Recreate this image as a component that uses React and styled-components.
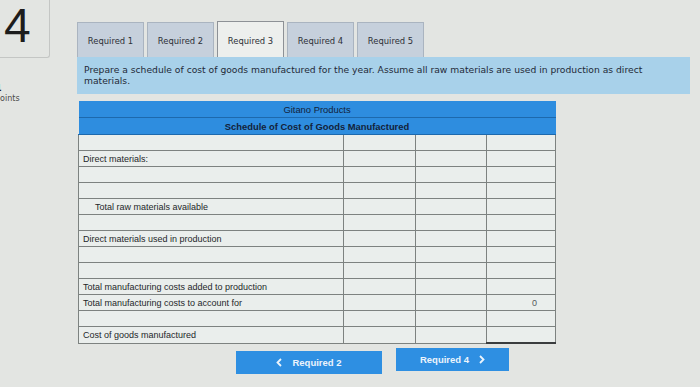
import React from 'react';
import styled, { createGlobalStyle } from 'styled-components';

const GlobalStyle = createGlobalStyle`
  html, body {
    margin: 0;
    padding: 0;
    background: #e3e5e2;
  }
  body {
    font-family: "DejaVu Sans", Verdana, sans-serif;
  }
`;

const Page = styled.div`
  display: flex;
  width: 700px;
  height: 387px;
  overflow: hidden;
  background: #e3e5e2;
`;

const Sidebar = styled.div`
  width: 77px;
  flex-shrink: 0;
  display: flex;
  flex-direction: column;
`;

const NumberBox = styled.div`
  width: 50px;
  height: 58px;
  box-sizing: border-box;
  border-right: 1px solid #c4c6c4;
  border-bottom: 1px solid #c4c6c4;
  border-bottom-right-radius: 3px;
  padding: 3px 0 0 4px;
  font-family: "Liberation Sans", Arial, sans-serif;
  font-size: 48px;
  line-height: 46px;
  color: #1d1d1d;
`;

const PointsBlock = styled.div`
  margin-top: 26px;
  overflow: hidden;
  font-size: 8px;
  line-height: 10px;
  color: #4a4a4a;
  & > span {
    display: block;
    margin-left: -5px;
  }
  & > b {
    display: block;
    margin-left: -4px;
    font-size: 8px;
    color: #222;
  }
`;

const Main = styled.div`
  flex: 1;
  padding-top: 22px;
  display: flex;
  flex-direction: column;
`;

const Tabs = styled.div`
  display: flex;
  gap: 3px;
  height: 35px;
`;

const Tab = styled.div`
  width: 67px;
  box-sizing: border-box;
  display: flex;
  align-items: center;
  justify-content: center;
  font-size: 8.4px;
  color: #2c2f36;
  background: ${(p) => (p.$active ? '#edefed' : '#c6d0dc')};
  border: 1px solid ${(p) => (p.$active ? '#8d9196' : '#aab4c0')};
  border-bottom: none;
  margin-top: ${(p) => (p.$active ? '-1px' : '0')};
  padding-top: 2px;
`;

const Instructions = styled.div`
  width: 613px;
  box-sizing: border-box;
  height: 37px;
  background: #a8d1ea;
  padding: 7px 7px 0;
  font-size: 9.2px;
  line-height: 11px;
  color: #1f2a38;
`;

const Table = styled.table`
  margin-top: 7px;
  margin-left: 1px;
  width: 477px;
  border-collapse: collapse;
  table-layout: fixed;
  font-family: "Liberation Sans", Arial, sans-serif;
  font-size: 9px;
  color: #2a2d2e;
`;

const HeadCell = styled.th`
  background: #2e8ddf;
  height: 16px;
  padding: 0;
  text-align: center;
  font-size: 9.4px;
  font-weight: ${(p) => (p.$bold ? 700 : 400)};
  color: #13223a;
  border-bottom: 1px solid #1d69ad;
`;

const Cell = styled.td`
  height: 15px;
  padding: 0 4px;
  background: #eaeeec;
  border: 1px solid #7d8280;
  text-align: ${(p) => (p.$right ? 'right' : 'left')};
  padding-left: ${(p) => (p.$indent ? '16px' : '4px')};
  padding-right: ${(p) => (p.$right ? '18px' : '4px')};
  color: ${(p) => (p.$right ? '#555a5c' : '#24272a')};
  white-space: nowrap;
  border-bottom: ${(p) => (p.$total ? '2px solid #3a3d3e' : '1px solid #7d8280')};
`;

const ButtonRow = styled.div`
  display: flex;
  gap: 14px;
  margin-top: 5px;
  padding-left: 159px;
`;

const NavButton = styled.div`
  width: ${(p) => p.$w}px;
  height: 23px;
  background: #2e8fe2;
  color: #ecf4fc;
  font-family: "Liberation Sans", Arial, sans-serif;
  font-weight: 700;
  font-size: 9.5px;
  display: flex;
  align-items: center;
  justify-content: center;
  gap: 10px;
  margin-top: ${(p) => p.$offset || 0}px;
`;

const Chevron = ({ dir }) => (
  <svg width="6" height="9" viewBox="0 0 6 9">
    <path
      d={dir === 'left' ? 'M5 1 L1.5 4.5 L5 8' : 'M1 1 L4.5 4.5 L1 8'}
      fill="none"
      stroke="#ecf4fc"
      strokeWidth="1.8"
    />
  </svg>
);

const rows = [
  { label: '' },
  { label: 'Direct materials:' },
  { label: '' },
  { label: '' },
  { label: 'Total raw materials available', indent: true },
  { label: '' },
  { label: 'Direct materials used in production' },
  { label: '' },
  { label: '' },
  { label: 'Total manufacturing costs added to production' },
  { label: 'Total manufacturing costs to account for', value: '0' },
  { label: '' },
  { label: 'Cost of goods manufactured', total: true },
];

const tabs = ['Required 1', 'Required 2', 'Required 3', 'Required 4', 'Required 5'];

export default function App() {
  return (
    <Page>
      <GlobalStyle />
      <Sidebar>
        <NumberBox>4</NumberBox>
        <PointsBlock>
          <b>1</b>
          <span>points</span>
        </PointsBlock>
      </Sidebar>
      <Main>
        <Tabs>
          {tabs.map((t) => (
            <Tab key={t} $active={t === 'Required 3'}>
              {t}
            </Tab>
          ))}
        </Tabs>
        <Instructions>
          Prepare a schedule of cost of goods manufactured for the year. Assume all raw materials are used in production as direct materials.
        </Instructions>
        <Table>
          <colgroup>
            <col style={{ width: 265 }} />
            <col style={{ width: 72 }} />
            <col style={{ width: 71 }} />
            <col style={{ width: 69 }} />
          </colgroup>
          <thead>
            <tr>
              <HeadCell colSpan={4}>Gitano Products</HeadCell>
            </tr>
            <tr>
              <HeadCell colSpan={4} $bold>
                Schedule of Cost of Goods Manufactured
              </HeadCell>
            </tr>
          </thead>
          <tbody>
            {rows.map((r, i) => (
              <tr key={i}>
                <Cell $indent={r.indent}>{r.label}</Cell>
                <Cell />
                <Cell />
                <Cell $right $total={r.total}>
                  {r.value || ''}
                </Cell>
              </tr>
            ))}
          </tbody>
        </Table>
        <ButtonRow>
          <NavButton $w={146} $offset={2}>
            <Chevron dir="left" />
            Required 2
          </NavButton>
          <NavButton $w={113} $offset={-1}>
            Required 4
            <Chevron dir="right" />
          </NavButton>
        </ButtonRow>
      </Main>
    </Page>
  );
}
